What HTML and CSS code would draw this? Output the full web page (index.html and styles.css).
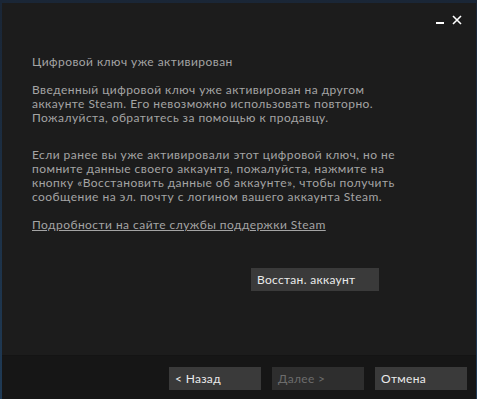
FILE: index.html
```html
<!DOCTYPE html>
<html lang="ru">

<head>
    <meta charset="UTF-8">
    <title>Steam - активация продукта</title>
    <link rel="stylesheet" href="styles.css">
</head>

<body>
    <div class="window">
        <div class="titlebar">
            <span class="win-btn minimize"></span>
            <span class="win-btn close">
                <svg width="10" height="10" viewBox="0 0 10 10">
                    <path d="M1 1 L9 9 M9 1 L1 9" stroke="#fff" stroke-width="1.6" />
                </svg>
            </span>
        </div>

        <div class="content">
            <p class="title">Цифровой ключ уже активирован</p>
            <p>Введенный цифровой ключ уже активирован на другом<br>
                аккаунте Steam. Его невозможно использовать повторно.<br>
                Пожалуйста, обратитесь за помощью к продавцу.</p>
            <p class="gap">Если ранее вы уже активировали этот цифровой ключ, но не<br>
                помните данные своего аккаунта, пожалуйста, нажмите на<br>
                кнопку «Восстановить данные об аккаунте», чтобы получить<br>
                сообщение на эл. почту с логином вашего аккаунта Steam.</p>
            <a href="#" class="support-link">Подробности на сайте службы поддержки Steam</a>
            <div class="recover-row">
                <button class="btn">Восстан. аккаунт</button>
            </div>
        </div>

        <div class="footer">
            <button class="btn">&lt; Назад</button>
            <button class="btn disabled">Далее &gt;</button>
            <button class="btn">Отмена</button>
        </div>
    </div>
</body>

</html>
```

FILE: styles.css
```css
body {
    margin: 0;
    height: 399px;
    overflow: hidden;
    background: linear-gradient(to bottom, #1a2636, #1f3a55);
    font-family: Lato, "Noto Sans", sans-serif;
}

.window {
    display: flex;
    flex-direction: column;
    margin: 3px 1px 0 2px;
    height: 396px;
    background-color: #1c1c1c;
}

.titlebar {
    display: flex;
    justify-content: flex-end;
    align-items: center;
    gap: 8px;
    height: 34px;
    padding-right: 14px;
}

.win-btn {
    display: flex;
    align-items: center;
    justify-content: center;
}

.minimize {
    width: 8px;
    height: 2px;
    margin-top: 6px;
    background-color: #fff;
}

.content {
    flex: 1;
    padding: 18px 30px 0;
    color: #a4a4a4;
    font-size: 12px;
    letter-spacing: 0.45px;
    line-height: 14px;
}

.content p {
    margin: 0 0 14px;
}

.content .gap {
    margin-top: 23px;
}

.support-link {
    color: #a4a4a4;
    text-decoration: underline;
}

.recover-row {
    display: flex;
    padding-left: 219px;
    margin-top: 36px;
}

.btn {
    width: 92px;
    height: 23px;
    padding: 0 6px;
    border: none;
    background-color: #3a3a3a;
    color: #eaeaea;
    font-family: Lato, "Noto Sans", sans-serif;
    font-size: 12px;
    letter-spacing: 0.3px;
    text-align: left;
    cursor: pointer;
}

.recover-row .btn {
    width: 128px;
}

.btn.disabled {
    background-color: #2e2e2e;
    color: #6c6c6c;
    cursor: default;
}

.footer {
    display: flex;
    justify-content: flex-end;
    gap: 11px;
    height: 44px;
    padding: 11px 9px 0 0;
    box-sizing: border-box;
    background-color: #161616;
    border-top: 1px solid #141414;
}
```
